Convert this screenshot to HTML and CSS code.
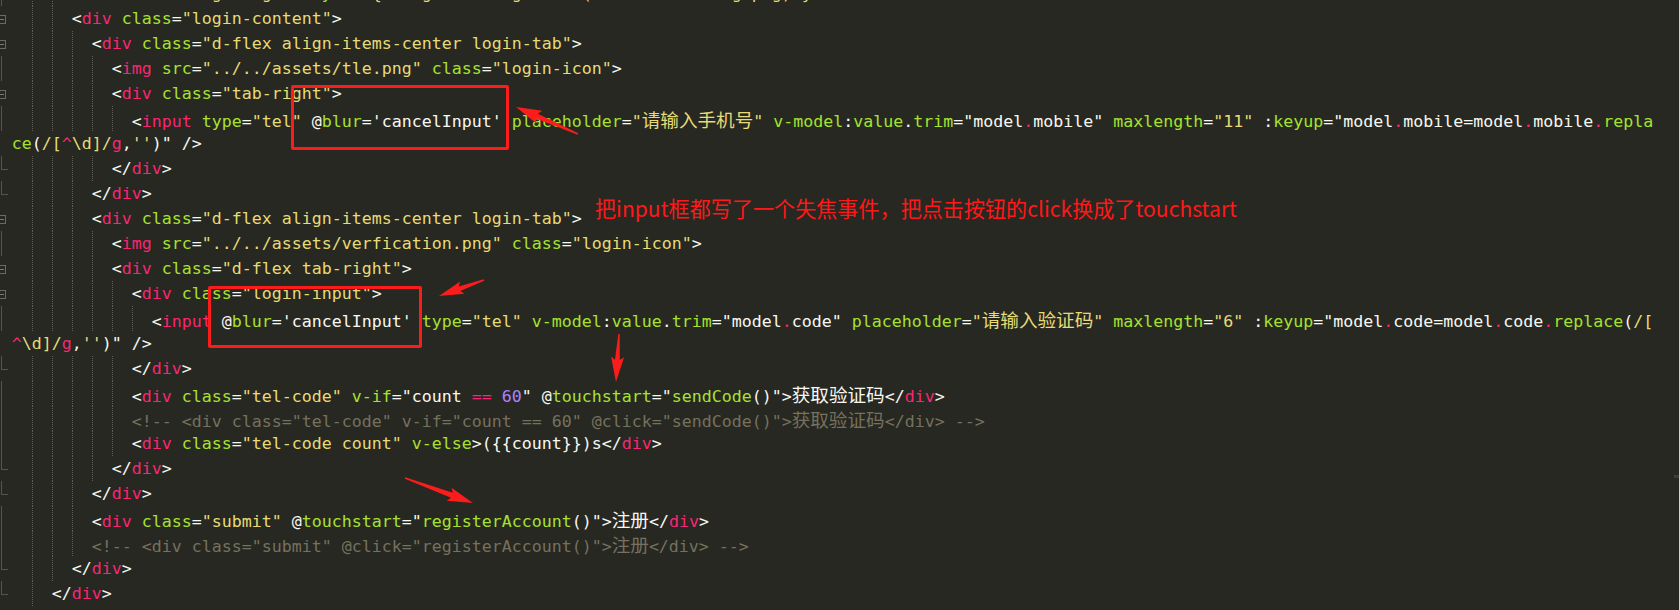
FILE: index.html
```html
<!DOCTYPE html>
<html lang="zh-CN">
<head>
<meta charset="utf-8">
<title>login-content</title>
<link rel="stylesheet" href="styles.css">
</head>
<body>
<div class="editor">
  <div class="code">
    <div class="row"><span class="gut mid"></span><span class="ind"></span><span class="ind g"></span><span class="ind g"></span><span class="txt">&lt;<span class="t">div</span> <span class="a">class</span>=<span class="s">"login-bg"</span> <span class="a">:style</span>=<span class="s">"{backgroundImage:'url(../../assets/bg.png)'}"</span>&gt;</span></div>
    <div class="row"><span class="gut fold"></span><span class="ind"></span><span class="ind g"></span><span class="ind g"></span><span class="txt">&lt;<span class="t">div</span> <span class="a">class</span>=<span class="s">"login-content"</span>&gt;</span></div>
    <div class="row"><span class="gut fold"></span><span class="ind"></span><span class="ind g"></span><span class="ind g"></span><span class="ind g"></span><span class="txt">&lt;<span class="t">div</span> <span class="a">class</span>=<span class="s">"d-flex align-items-center login-tab"</span>&gt;</span></div>
    <div class="row"><span class="gut mid"></span><span class="ind"></span><span class="ind g"></span><span class="ind g"></span><span class="ind g"></span><span class="ind g"></span><span class="txt">&lt;<span class="t">img</span> <span class="a">src</span>=<span class="s">"../../assets/tle.png"</span> <span class="a">class</span>=<span class="s">"login-icon"</span>&gt;</span></div>
    <div class="row"><span class="gut fold"></span><span class="ind"></span><span class="ind g"></span><span class="ind g"></span><span class="ind g"></span><span class="ind g"></span><span class="txt">&lt;<span class="t">div</span> <span class="a">class</span>=<span class="s">"tab-right"</span>&gt;</span></div>
    <div class="row"><span class="gut mid"></span><span class="ind"></span><span class="ind g"></span><span class="ind g"></span><span class="ind g"></span><span class="ind g"></span><span class="ind g"></span><span class="txt">&lt;<span class="t">input</span> <span class="a">type</span>=<span class="s">"tel"</span> @<span class="a">blur</span>='cancelInput' <span class="a">placeholder</span>=<span class="s">"<span class="cj">请输入手机号</span>"</span> <span class="a">v-model</span>:<span class="a">value</span>.<span class="a">trim</span>="model<span class="t">.</span>mobile" <span class="a">maxlength</span>=<span class="s">"11"</span> :<span class="a">keyup</span>="model<span class="t">.</span>mobile=model<span class="t">.</span>mobile<span class="t">.</span><span class="a">repla</span></span></div>
    <div class="row"><span class="gut"></span><span class="txt"><span class="a">ce</span>(<span class="s">/[</span><span class="t">^</span><span class="s">\d]/</span><span class="t">g</span>,<span class="s">''</span>)" /&gt;</span></div>
    <div class="row"><span class="gut end"></span><span class="ind"></span><span class="ind g"></span><span class="ind g"></span><span class="ind g"></span><span class="ind g"></span><span class="txt">&lt;/<span class="t">div</span>&gt;</span></div>
    <div class="row"><span class="gut end"></span><span class="ind"></span><span class="ind g"></span><span class="ind g"></span><span class="ind g"></span><span class="txt">&lt;/<span class="t">div</span>&gt;</span></div>
    <div class="row"><span class="gut fold"></span><span class="ind"></span><span class="ind g"></span><span class="ind g"></span><span class="ind g"></span><span class="txt">&lt;<span class="t">div</span> <span class="a">class</span>=<span class="s">"d-flex align-items-center login-tab"</span>&gt;</span></div>
    <div class="row"><span class="gut mid"></span><span class="ind"></span><span class="ind g"></span><span class="ind g"></span><span class="ind g"></span><span class="ind g"></span><span class="txt">&lt;<span class="t">img</span> <span class="a">src</span>=<span class="s">"../../assets/verfication.png"</span> <span class="a">class</span>=<span class="s">"login-icon"</span>&gt;</span></div>
    <div class="row"><span class="gut fold"></span><span class="ind"></span><span class="ind g"></span><span class="ind g"></span><span class="ind g"></span><span class="ind g"></span><span class="txt">&lt;<span class="t">div</span> <span class="a">class</span>=<span class="s">"d-flex tab-right"</span>&gt;</span></div>
    <div class="row"><span class="gut fold"></span><span class="ind"></span><span class="ind g"></span><span class="ind g"></span><span class="ind g"></span><span class="ind g"></span><span class="ind g"></span><span class="txt">&lt;<span class="t">div</span> <span class="a">class</span>=<span class="s">"login-input"</span>&gt;</span></div>
    <div class="row"><span class="gut mid"></span><span class="ind"></span><span class="ind g"></span><span class="ind g"></span><span class="ind g"></span><span class="ind g"></span><span class="ind g"></span><span class="ind g"></span><span class="txt">&lt;<span class="t">input</span> @<span class="a">blur</span>='cancelInput' <span class="a">type</span>=<span class="s">"tel"</span> <span class="a">v-model</span>:<span class="a">value</span>.<span class="a">trim</span>="model<span class="t">.</span>code" <span class="a">placeholder</span>=<span class="s">"<span class="cj">请输入验证码</span>"</span> <span class="a">maxlength</span>=<span class="s">"6"</span> :<span class="a">keyup</span>="model<span class="t">.</span>code=model<span class="t">.</span>code<span class="t">.</span><span class="a">replace</span>(<span class="s">/[</span></span></div>
    <div class="row"><span class="gut"></span><span class="txt"><span class="t">^</span><span class="s">\d]/</span><span class="t">g</span>,<span class="s">''</span>)" /&gt;</span></div>
    <div class="row"><span class="gut end"></span><span class="ind"></span><span class="ind g"></span><span class="ind g"></span><span class="ind g"></span><span class="ind g"></span><span class="ind g"></span><span class="txt">&lt;/<span class="t">div</span>&gt;</span></div>
    <div class="row"><span class="gut mid"></span><span class="ind"></span><span class="ind g"></span><span class="ind g"></span><span class="ind g"></span><span class="ind g"></span><span class="ind g"></span><span class="txt">&lt;<span class="t">div</span> <span class="a">class</span>=<span class="s">"tel-code"</span> <span class="a">v-if</span>="count <span class="t">==</span> <span class="n">60</span>" @<span class="a">touchstart</span>="<span class="a">sendCode</span>()"&gt;<span class="cj">获取验证码</span>&lt;/<span class="t">div</span>&gt;</span></div>
    <div class="row"><span class="gut mid"></span><span class="ind"></span><span class="ind g"></span><span class="ind g"></span><span class="ind g"></span><span class="ind g"></span><span class="ind g"></span><span class="txt c">&lt;!-- &lt;div class="tel-code" v-if="count == 60" @click="sendCode()"&gt;<span class="cj">获取验证码</span>&lt;/div&gt; --&gt;</span></div>
    <div class="row"><span class="gut mid"></span><span class="ind"></span><span class="ind g"></span><span class="ind g"></span><span class="ind g"></span><span class="ind g"></span><span class="ind g"></span><span class="txt">&lt;<span class="t">div</span> <span class="a">class</span>=<span class="s">"tel-code count"</span> <span class="a">v-else</span>&gt;({{count}})s&lt;/<span class="t">div</span>&gt;</span></div>
    <div class="row"><span class="gut end"></span><span class="ind"></span><span class="ind g"></span><span class="ind g"></span><span class="ind g"></span><span class="ind g"></span><span class="txt">&lt;/<span class="t">div</span>&gt;</span></div>
    <div class="row"><span class="gut end"></span><span class="ind"></span><span class="ind g"></span><span class="ind g"></span><span class="ind g"></span><span class="txt">&lt;/<span class="t">div</span>&gt;</span></div>
    <div class="row"><span class="gut mid"></span><span class="ind"></span><span class="ind g"></span><span class="ind g"></span><span class="ind g"></span><span class="txt">&lt;<span class="t">div</span> <span class="a">class</span>=<span class="s">"submit"</span> @<span class="a">touchstart</span>="<span class="a">registerAccount</span>()"&gt;<span class="cj">注册</span>&lt;/<span class="t">div</span>&gt;</span></div>
    <div class="row"><span class="gut mid"></span><span class="ind"></span><span class="ind g"></span><span class="ind g"></span><span class="ind g"></span><span class="txt c">&lt;!-- &lt;div class="submit" @click="registerAccount()"&gt;<span class="cj">注册</span>&lt;/div&gt; --&gt;</span></div>
    <div class="row"><span class="gut end"></span><span class="ind"></span><span class="ind g"></span><span class="ind g"></span><span class="txt">&lt;/<span class="t">div</span>&gt;</span></div>
    <div class="row"><span class="gut end"></span><span class="ind"></span><span class="ind g"></span><span class="txt">&lt;/<span class="t">div</span>&gt;</span></div>
  </div>
  <div class="minimap"><span class="mm-bar"></span></div>
</div>

<div class="note">把input框都写了一个失焦事件，把点击按钮的click换成了touchstart</div>
<div class="redbox box1"></div>
<div class="redbox box2"></div>
<svg class="arrows" width="1679" height="610" viewBox="0 0 1679 610" aria-hidden="true">
  <g fill="#fb1c1c">
    <polygon transform="translate(578 134) rotate(203.5)" points="0,-0.7 45,-2.6 42,-7 67.6,0 42,7 45,2.6 0,0.7"/>
    <polygon transform="translate(484 280) rotate(160.4)" points="0,-0.7 26,-2.4 23,-6.5 47.8,0 23,6.5 26,2.4 0,0.7"/>
    <polygon transform="translate(619 334) rotate(93.6)" points="0,-0.7 26,-2.4 23,-6.5 48,0 23,6.5 26,2.4 0,0.7"/>
    <polygon transform="translate(405 478) rotate(20.2)" points="0,-0.7 50,-2.6 47,-7 72.4,0 47,7 50,2.6 0,0.7"/>
  </g>
</svg>
</body>
</html>
```

FILE: styles.css
```css
html, body {
  margin: 0;
  padding: 0;
}
body {
  background: #272822;
  width: 1679px;
  height: 610px;
  overflow: hidden;
  position: relative;
}
.editor {
  display: flex;
  height: 610px;
  overflow: hidden;
}
.code {
  flex: 1;
  margin-top: -19.5px;
  font-family: "DejaVu Sans Mono", monospace;
  font-size: 16.61px;
  line-height: 25px;
  color: #f8f8f2;
}
.row {
  display: flex;
  height: 25px;
  white-space: pre;
}
.gut {
  flex: none;
  width: 11.7px;
  position: relative;
}
.gut.mid::before {
  content: "";
  position: absolute;
  left: 1px;
  top: 0;
  bottom: 0;
  width: 1px;
  background: #55554d;
}
.gut.end::before {
  content: "";
  position: absolute;
  left: 1px;
  top: 0;
  height: 13px;
  width: 1px;
  background: #55554d;
}
.gut.end::after {
  content: "";
  position: absolute;
  left: 1px;
  top: 13px;
  width: 7px;
  height: 1px;
  background: #55554d;
}
.gut.fold::before {
  content: "";
  position: absolute;
  left: -3px;
  top: 9px;
  width: 7px;
  height: 7px;
  border: 1px solid #6a6a62;
}
.gut.fold::after {
  content: "";
  position: absolute;
  left: 0;
  top: 13px;
  width: 4px;
  height: 1px;
  background: #7a7a72;
}
.ind {
  flex: none;
  width: 20px;
  height: 25px;
  box-sizing: border-box;
}
.ind.g {
  border-left: 1px dotted #5f5e56;
}
.txt {
  white-space: pre;
}
.t { color: #f92672; }
.a { color: #a6e22e; }
.s { color: #e6db74; }
.n { color: #ae81ff; }
.c, .c .cj { color: #75715e; }
.cj {
  font-family: "Noto Sans CJK SC", sans-serif;
  font-size: 18.6px;
  line-height: 25px;
}
.minimap {
  flex: none;
  width: 5px;
  position: relative;
}
.mm-bar {
  position: absolute;
  left: 0;
  top: 475px;
  width: 5px;
  height: 3px;
  background: #3e3e38;
}
.note {
  position: absolute;
  left: 595px;
  top: 196px;
  font-family: "Noto Sans CJK SC", sans-serif;
  font-size: 21.1px;
  line-height: 24px;
  color: #fe1818;
  white-space: nowrap;
}
.redbox {
  position: absolute;
  box-sizing: border-box;
  border: 3px solid #fc1c1c;
  border-radius: 2px;
}
.box1 {
  left: 291px;
  top: 85px;
  width: 218px;
  height: 65px;
}
.box2 {
  left: 208px;
  top: 286px;
  width: 214px;
  height: 62px;
}
.arrows {
  position: absolute;
  left: 0;
  top: 0;
  pointer-events: none;
}
```
